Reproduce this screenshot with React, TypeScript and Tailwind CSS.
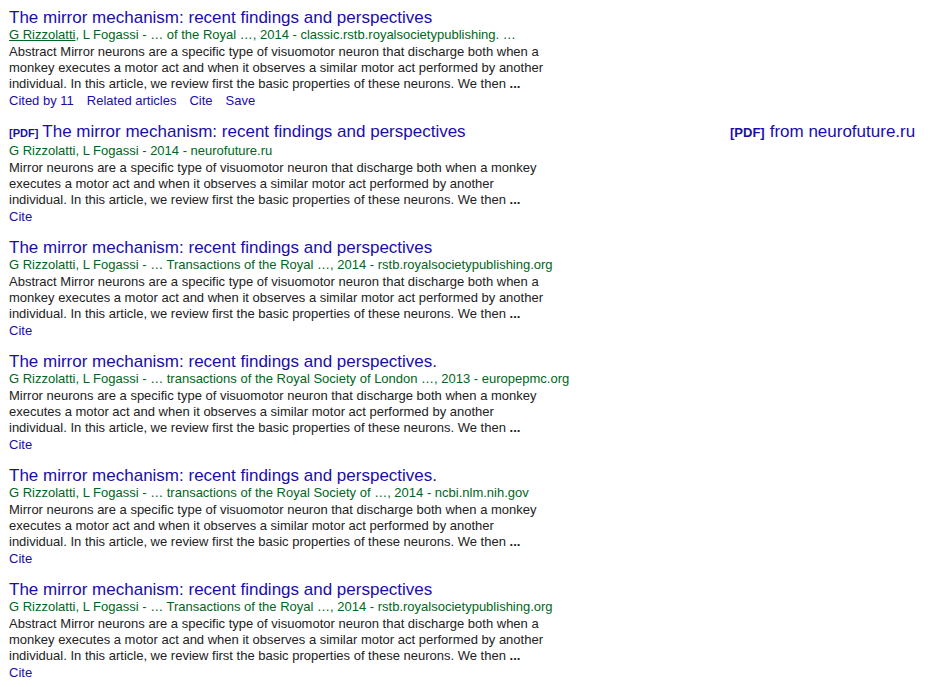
import React from 'react';

type Result = {
  pdf?: boolean;
  title: string;
  authorLink?: boolean;
  source: string;
  abstract?: boolean;
  cited?: boolean;
  side?: string;
};

const RESULTS: Result[] = [
  {
    title: 'The mirror mechanism: recent findings and perspectives',
    authorLink: true,
    source: ' - … of the Royal …, 2014 - classic.rstb.royalsocietypublishing. …',
    abstract: true,
    cited: true,
  },
  {
    pdf: true,
    title: 'The mirror mechanism: recent findings and perspectives',
    source: ' - 2014 - neurofuture.ru',
    side: 'from neurofuture.ru',
  },
  {
    title: 'The mirror mechanism: recent findings and perspectives',
    source: ' - … Transactions of the Royal …, 2014 - rstb.royalsocietypublishing.org',
    abstract: true,
  },
  {
    title: 'The mirror mechanism: recent findings and perspectives.',
    source: ' - … transactions of the Royal Society of London …, 2013 - europepmc.org',
  },
  {
    title: 'The mirror mechanism: recent findings and perspectives.',
    source: ' - … transactions of the Royal Society of …, 2014 - ncbi.nlm.nih.gov',
  },
  {
    title: 'The mirror mechanism: recent findings and perspectives',
    source: ' - … Transactions of the Royal …, 2014 - rstb.royalsocietypublishing.org',
    abstract: true,
  },
];

const SNIPPET =
  'Mirror neurons are a specific type of visuomotor neuron that discharge both when a monkey executes a motor act and when it observes a similar motor act performed by another individual. In this article, we review first the basic properties of these neurons. We then';

export default function App() {
  return (
    <div className="min-h-[687px] bg-white pl-[9px] pt-[8px] font-['Liberation_Sans',Arial,sans-serif]">
      {RESULTS.map((r, i) => (
        <div key={i} className="mb-[13px] flex">
          <div className="w-[640px] shrink-0">
            <h3 className="text-[17px] leading-[19px] text-[#1a0dab]">
              {r.pdf && (
                <span className="mr-[4px] text-[11px] font-bold">[PDF]</span>
              )}
              <a href="#">{r.title}</a>
            </h3>
            <div className="text-[13px] leading-[16px] text-[#006621]">
              {r.authorLink ? (
                <a href="#" className="underline">G Rizzolatti</a>
              ) : (
                'G Rizzolatti'
              )}
              , L Fogassi{r.source}
            </div>
            <div className="mt-px max-w-[545px] text-[13px] leading-[16px] text-[#222]">
              {r.abstract ? 'Abstract ' : ''}
              {SNIPPET} <b>...</b>
            </div>
            <div className="mt-px flex gap-[13px] text-[13px] leading-[16px] text-[#1a0dab]">
              {r.cited && <a href="#">Cited by 11</a>}
              {r.cited && <a href="#">Related articles</a>}
              <a href="#">Cite</a>
              {r.cited && <a href="#">Save</a>}
            </div>
          </div>
          {r.side && (
            <div className="ml-[81px] text-[17px] leading-[19px] text-[#1a0dab]">
              <span className="mr-[5px] text-[13px] font-bold">[PDF]</span>
              {r.side}
            </div>
          )}
        </div>
      ))}
    </div>
  );
}
